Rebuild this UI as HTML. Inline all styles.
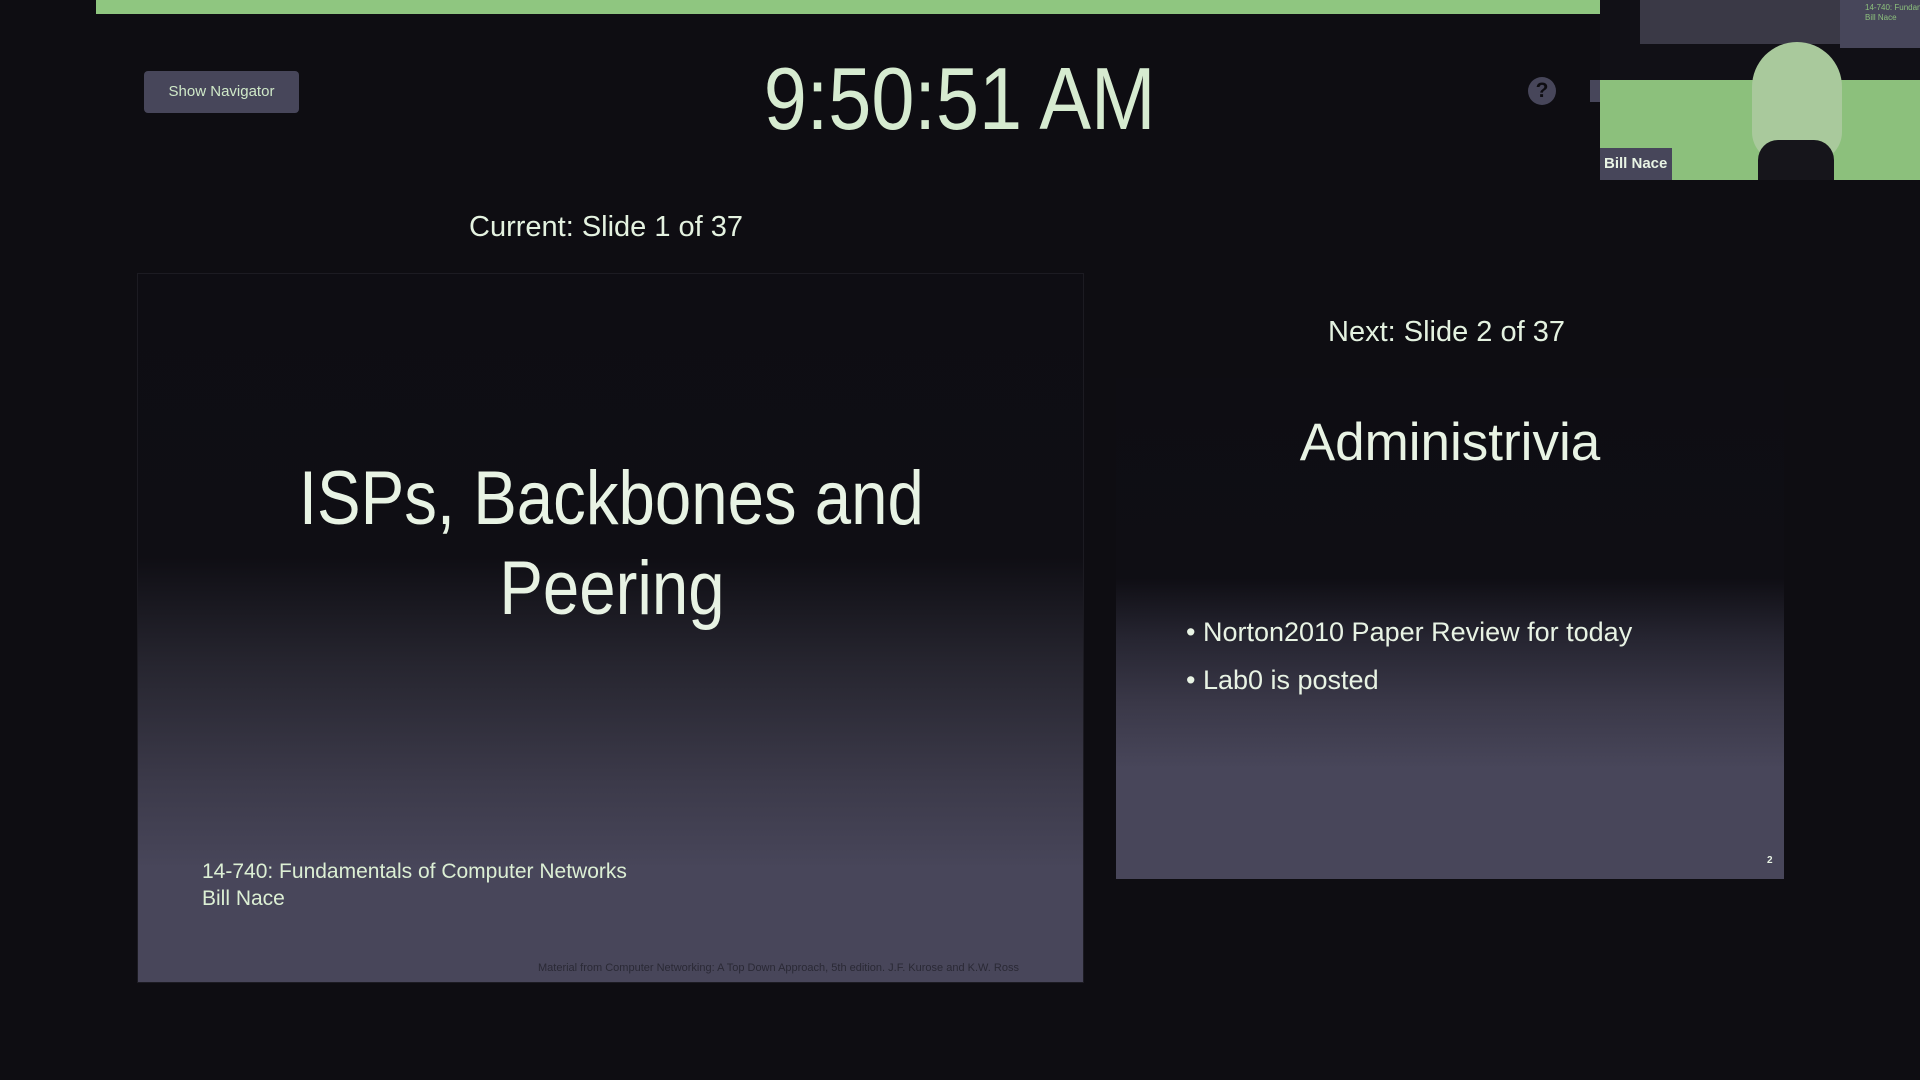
<!DOCTYPE html>
<html><head><meta charset="utf-8"><style>
*{margin:0;padding:0;box-sizing:border-box}
body{width:1920px;height:1080px;background:#0e0d12;position:relative;overflow:hidden;font-family:"Liberation Sans",sans-serif;color:#dcefd8}
.a{position:absolute;white-space:nowrap}
.bar{left:96px;top:0;width:1504px;height:14px;background:#8fc680}
.btn{left:144px;top:71px;width:155px;height:42px;background:#47465a;border-radius:4px;color:#cfe8c8;font-size:15px;line-height:42px;text-align:center}
.clock{left:0;width:1920px;top:48px;text-align:center;font-size:88px;color:#d6ebd0;font-weight:normal}
.clock span{display:inline-block;transform:scaleX(0.88);transform-origin:center;margin-left:0px}
.lbl{font-size:29px;color:#e4f2e0}
.slide{background:linear-gradient(#0e0d13 0%,#0f0e14 40%,#26252f 55%,#3c3a4a 72%,#48465a 84%,#48465a 100%)}
.t1{font-size:76px;color:#e8f3e4;text-align:center;width:947px;left:0;line-height:90px}
.t1 span{display:inline-block;transform:scaleX(0.86)}
</style></head><body>
<div class="a bar"></div>
<div class="a btn">Show Navigator</div>
<div class="a clock"><span>9:50:51 AM</span></div>
<div class="a" style="left:1528px;top:77px;width:28px;height:28px;border-radius:50%;background:#47465a;color:#0e0d12;font-size:21px;font-weight:bold;text-align:center;line-height:28px">?</div>
<div class="a" style="left:1590px;top:80px;width:10px;height:22px;background:#47465a"></div>
<!-- video -->
<div class="a" style="left:1600px;top:0;width:320px;height:180px;background:#8cc07c;overflow:hidden">
 <div class="a" style="left:0;top:0;width:320px;height:80px;background:#111016"></div>
 <div class="a" style="left:40px;top:0;width:200px;height:44px;background:#3a3946"></div>
 <div class="a" style="left:240px;top:0;width:80px;height:48px;background:#47465a"></div>
 <div class="a" style="left:265px;top:3px;font-size:8px;color:#8cc07c;line-height:10px">14-740: Fundam<br>Bill Nace</div>
 <div class="a" style="left:152px;top:42px;width:90px;height:120px;border-radius:45px 45px 30px 30px;background:#a9c99c"></div>
 <div class="a" style="left:158px;top:140px;width:76px;height:40px;border-radius:20px 20px 0 0;background:#16151b"></div>
 <div class="a" style="left:0;top:148px;width:72px;height:32px;background:#47465a"></div>
 <div class="a" style="left:4px;top:155px;font-size:15px;font-weight:bold;color:#e8f3e4">Bill Nace</div>
</div>
<div class="a lbl" style="left:469px;top:211px">Current: Slide 1 of 37</div>
<div class="a slide" style="left:137px;top:273px;width:947px;height:710px;border:1px solid #1c1b22">
 <div class="a t1" style="top:180px"><span>ISPs, Backbones and</span></div>
 <div class="a t1" style="top:270px"><span>Peering</span></div>
 <div class="a" style="left:64px;top:584px;font-size:21px;line-height:27px;color:#dcefd4">14-740: Fundamentals of Computer Networks<br>Bill Nace</div>
 <div class="a" style="left:400px;top:688px;font-size:11px;color:#2a2935">Material from Computer Networking: A Top Down Approach, 5th edition. J.F. Kurose and K.W. Ross</div>
</div>
<div class="a lbl" style="left:1328px;top:316px">Next: Slide 2 of 37</div>
<div class="a slide" style="left:1116px;top:378px;width:668px;height:501px;background:linear-gradient(#0e0d13 0%,#0f0e14 40%,#262531 52%,#3a3848 65%,#48465a 78%,#48465a 100%)">
 <div class="a" style="left:0;width:668px;top:34px;text-align:center;font-size:53px;color:#e8f3e4">Administrivia</div>
 <div class="a" style="left:70px;top:230px;font-size:27px;line-height:48px;color:#e8f3e4">•&nbsp;Norton2010 Paper Review for today<br>•&nbsp;Lab0 is posted</div>
 <div class="a" style="left:651px;top:477px;font-size:10px;font-weight:bold;color:#e8f3e4">2</div>
</div>
</body></html>
